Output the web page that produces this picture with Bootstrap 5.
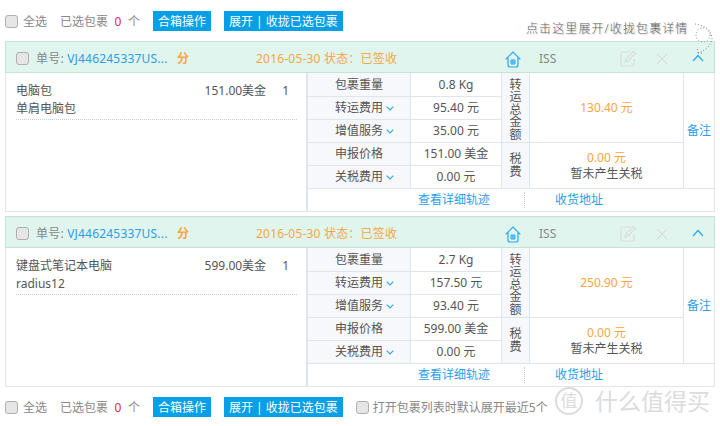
<!DOCTYPE html>
<html lang="zh-CN">
<head>
  <meta charset="UTF-8">
  <title>包裹列表</title>
  <link href="https://cdn.jsdelivr.net/npm/bootstrap@5.3.0/dist/css/bootstrap.min.css" rel="stylesheet">
  <style>
    body { font-family: "Noto Sans", "Noto Sans CJK SC", sans-serif; font-size: 12px; color: #555; width: 720px; height: 426px; overflow: hidden; position: relative; }
    .pkg-bar { height: 20px; padding-left: 5px; color: #888; }
    .pkg-bar > span:not(.pkg-check) { padding-top: 2px; }
    .pkg-top { margin-top: 11px; margin-bottom: 10px; }
    .pkg-bottom { margin-top: 10px; }
    .pkg-check { width: 13px; height: 13px; border: 1px solid #b0b0b0; border-radius: 3px; background: #e6e6e6; flex: none; }
    .pkg-btn { background: #07a0e6; color: #fff; height: 20px; line-height: 20px; padding: 1px 5px 0; font-size: 12px; border: 0; border-radius: 0; white-space: nowrap; }
    .pkg-red { color: #f0274a; }
    .pkg-gap { margin-left: 13px; }
    .pkg-near { margin-left: 6.5px; }
    .pkg-tick { margin-right: 5px; }
    .pkg-box { margin: 0 5px; width: 710px; border: 1px solid #dfe5ec; }
    .pkg-box + .pkg-box { margin-top: 4px; }
    .pkg-head { height: 32px; background: #e0f5ee; border: 1px solid #c6e3da; margin: -1px -1px 0; color: #888; position: relative; }
    .pkg-head span { line-height: 18px; }
    .pkg-blue { color: #2f9de4; text-decoration: none; }
    .pkg-orange { color: #f9a543; }
    .pkg-main { width: 301px; border-right: 1px solid #dfe5ec; padding: 9px 9px 0 10px; flex: none; }
    .pkg-item { border-bottom: 1px dotted #ccc; height: 38px; line-height: 18px; }
    .pkg-table { border-collapse: collapse; table-layout: fixed; width: 407px; }
    .pkg-table td { border: 1px solid #dfe5ec; border-top: 0; text-align: center; height: 23px; padding: 1px 0 0; line-height: 14px; }
    .pkg-table tr td:last-child { border-right: 0; }
    .pkg-table td.pkg-foot { height: 23px; border-bottom: 0; padding: 1px 0 0; }
    .pkg-label { background: #f6f8fb; }
    .pkg-chev { margin-left: 3px; margin-right: -11px; }
    .pkg-table td.pkg-stack { background: #f6f8fb; }
    .pkg-table td.pkg-stack-long { padding-top: 5px; }
    .pkg-stack span { display: block; width: 12px; margin: 0 auto; line-height: 12.5px; }
    .pkg-link-a { margin-left: 110px; }
    .pkg-sep { border-left: 1px dotted #ccc; height: 16px; margin: 0 30px 0 34px; }
    .pkg-hand { position: absolute; left: 526px; top: 20px; font-size: 12px; letter-spacing: 1.1px; color: #666; text-shadow: 1px 1px 1px #ccc; white-space: nowrap; font-weight: 300; }
    .pkg-curl { position: absolute; left: 690px; top: 20px; }
    .pkg-mark { position: absolute; left: 555px; top: 387px; color: #dcdcdc; font-size: 23px; line-height: 28px; white-space: nowrap; display: flex; align-items: center; gap: 12px; }
    .pkg-mark-circle { width: 28px; height: 28px; border: 2px solid #dcdcdc; border-radius: 50%; font-size: 17px; line-height: 23px; text-align: center; }
    .pkg-home { position: absolute; left: 499px; top: 9px; }
    .pkg-iss { position: absolute; left: 533px; top: 8px; }
    .pkg-edit { position: absolute; left: 614px; top: 8px; }
    .pkg-x { position: absolute; left: 650px; top: 11px; }
    .pkg-up { position: absolute; left: 686px; top: 12px; }
    .pkg-no { position: absolute; left: 30px; top: 8px; white-space: nowrap; letter-spacing: 0.2px; }
    .pkg-date { position: absolute; left: 250px; top: 8px; white-space: nowrap; letter-spacing: 0.2px; }
    .pkg-fen { position: absolute; left: 171px; top: 8px; font-weight: 700; }
    .pkg-headcheck { position: absolute; left: 10px; top: 10px; }
    .pkg-line { line-height: 16px; }
  </style>
</head>
<body>
  <div class="pkg-bar pkg-top d-flex align-items-center">
    <span class="pkg-check pkg-tick"></span><span>全选</span>
    <span class="pkg-gap">已选包裹</span><span class="pkg-red pkg-near">0</span><span class="pkg-near">个</span>
    <button class="btn pkg-btn pkg-gap">合箱操作</button>
    <button class="btn pkg-btn pkg-gap">展开 | 收拢已选包裹</button>
  </div>

  <div class="pkg-box">
    <div class="pkg-head">
      <span class="pkg-check pkg-headcheck d-block"></span>
      <span class="pkg-no">单号: <a class="pkg-blue" href="#">VJ446245337US...</a></span>
      <span class="pkg-fen pkg-orange">分</span>
      <span class="pkg-date pkg-orange">2016-05-30 状态：已签收</span>
      <svg class="pkg-home" width="16" height="17" viewBox="0 0 16 17" fill="none" stroke="#2aa7ea" stroke-width="1.2"><path d="M.7 8.300 8 1 15.300 8.300M3 6.500V14a2 2 0 0 0 2 2h6a2 2 0 0 0 2-2V6.500"/><path d="M6 9h4v4H6zM8 9v4M6 11h4" stroke-width="1"/></svg>
      <span class="pkg-iss">ISS</span>
      <svg class="pkg-edit" width="17" height="17" viewBox="0 0 17 17" fill="none" stroke="#d8dedb" stroke-width="1.2"><path d="M14 9V15a1 1 0 0 1-1 1H2a1 1 0 0 1-1-1V3a1 1 0 0 1 1-1h9"/><path d="M5 12 6 9 13.500 1.500 15.500 3.500 8 11z"/></svg>
      <svg class="pkg-x" width="12" height="12" viewBox="0 0 12 12" stroke="#d8dedb" stroke-width="1.100"><path d="M1 1 11 11M11 1 1 11"/></svg>
      <svg class="pkg-up" width="12" height="8" viewBox="0 0 12 8" fill="none" stroke="#2aa7ea" stroke-width="1.200"><path d="M1 7 6 1.500 11 7"/></svg>
    </div>
    <div class="d-flex">
      <div class="pkg-main">
        <div class="pkg-item d-flex">
          <div class="flex-grow-1">电脑包<br>单肩电脑包</div>
          <div class="me-2">151.00美金</div>
          <div class="me-2 ms-2">1</div>
        </div>
      </div>
      <table class="pkg-table">
        <colgroup><col style="width:103px"><col style="width:91px"><col style="width:28px"><col style="width:154px"><col></colgroup>
        <tr><td class="pkg-label">包裹重量</td><td>0.8 Kg</td><td class="pkg-stack pkg-stack-long" rowspan="3"><span>转运总金额</span></td><td class="pkg-orange" rowspan="3">130.40 元</td><td rowspan="5"><a class="pkg-blue" href="#">备注</a></td></tr>
        <tr><td class="pkg-label">转运费用<svg class="pkg-chev" width="8" height="5" viewBox="0 0 8 5" fill="none" stroke="#2aa7ea" stroke-width="1.100"><path d="M.7.700 4 4 7.300.700"/></svg></td><td>95.40 元</td></tr>
        <tr><td class="pkg-label">增值服务<svg class="pkg-chev" width="8" height="5" viewBox="0 0 8 5" fill="none" stroke="#2aa7ea" stroke-width="1.100"><path d="M.7.700 4 4 7.300.700"/></svg></td><td>35.00 元</td></tr>
        <tr><td class="pkg-label">申报价格</td><td>151.00 美金</td><td class="pkg-stack" rowspan="2"><span>税费</span></td><td rowspan="2"><div class="pkg-orange pkg-line">0.00 元</div><div class="pkg-line">暂未产生关税</div></td></tr>
        <tr><td class="pkg-label">关税费用<svg class="pkg-chev" width="8" height="5" viewBox="0 0 8 5" fill="none" stroke="#2aa7ea" stroke-width="1.100"><path d="M.7.700 4 4 7.300.700"/></svg></td><td>0.00 元</td></tr>
        <tr><td colspan="5" class="pkg-foot"><div class="d-flex align-items-center"><a class="pkg-blue pkg-link-a" href="#">查看详细轨迹</a><span class="pkg-sep"></span><a class="pkg-blue" href="#">收货地址</a></div></td></tr>
      </table>
    </div>
  </div>

  <div class="pkg-box">
    <div class="pkg-head">
      <span class="pkg-check pkg-headcheck d-block"></span>
      <span class="pkg-no">单号: <a class="pkg-blue" href="#">VJ446245337US...</a></span>
      <span class="pkg-fen pkg-orange">分</span>
      <span class="pkg-date pkg-orange">2016-05-30 状态：已签收</span>
      <svg class="pkg-home" width="16" height="17" viewBox="0 0 16 17" fill="none" stroke="#2aa7ea" stroke-width="1.2"><path d="M.7 8.300 8 1 15.300 8.300M3 6.500V14a2 2 0 0 0 2 2h6a2 2 0 0 0 2-2V6.500"/><path d="M6 9h4v4H6zM8 9v4M6 11h4" stroke-width="1"/></svg>
      <span class="pkg-iss">ISS</span>
      <svg class="pkg-edit" width="17" height="17" viewBox="0 0 17 17" fill="none" stroke="#d8dedb" stroke-width="1.2"><path d="M14 9V15a1 1 0 0 1-1 1H2a1 1 0 0 1-1-1V3a1 1 0 0 1 1-1h9"/><path d="M5 12 6 9 13.500 1.500 15.500 3.500 8 11z"/></svg>
      <svg class="pkg-x" width="12" height="12" viewBox="0 0 12 12" stroke="#d8dedb" stroke-width="1.100"><path d="M1 1 11 11M11 1 1 11"/></svg>
      <svg class="pkg-up" width="12" height="8" viewBox="0 0 12 8" fill="none" stroke="#2aa7ea" stroke-width="1.200"><path d="M1 7 6 1.500 11 7"/></svg>
    </div>
    <div class="d-flex">
      <div class="pkg-main">
        <div class="pkg-item d-flex">
          <div class="flex-grow-1">键盘式笔记本电脑<br>radius12</div>
          <div class="me-2">599.00美金</div>
          <div class="me-2 ms-2">1</div>
        </div>
      </div>
      <table class="pkg-table">
        <colgroup><col style="width:103px"><col style="width:91px"><col style="width:28px"><col style="width:154px"><col></colgroup>
        <tr><td class="pkg-label">包裹重量</td><td>2.7 Kg</td><td class="pkg-stack pkg-stack-long" rowspan="3"><span>转运总金额</span></td><td class="pkg-orange" rowspan="3">250.90 元</td><td rowspan="5"><a class="pkg-blue" href="#">备注</a></td></tr>
        <tr><td class="pkg-label">转运费用<svg class="pkg-chev" width="8" height="5" viewBox="0 0 8 5" fill="none" stroke="#2aa7ea" stroke-width="1.100"><path d="M.7.700 4 4 7.300.700"/></svg></td><td>157.50 元</td></tr>
        <tr><td class="pkg-label">增值服务<svg class="pkg-chev" width="8" height="5" viewBox="0 0 8 5" fill="none" stroke="#2aa7ea" stroke-width="1.100"><path d="M.7.700 4 4 7.300.700"/></svg></td><td>93.40 元</td></tr>
        <tr><td class="pkg-label">申报价格</td><td>599.00 美金</td><td class="pkg-stack" rowspan="2"><span>税费</span></td><td rowspan="2"><div class="pkg-orange pkg-line">0.00 元</div><div class="pkg-line">暂未产生关税</div></td></tr>
        <tr><td class="pkg-label">关税费用<svg class="pkg-chev" width="8" height="5" viewBox="0 0 8 5" fill="none" stroke="#2aa7ea" stroke-width="1.100"><path d="M.7.700 4 4 7.300.700"/></svg></td><td>0.00 元</td></tr>
        <tr><td colspan="5" class="pkg-foot"><div class="d-flex align-items-center"><a class="pkg-blue pkg-link-a" href="#">查看详细轨迹</a><span class="pkg-sep"></span><a class="pkg-blue" href="#">收货地址</a></div></td></tr>
      </table>
    </div>
  </div>

  <div class="pkg-bar pkg-bottom d-flex align-items-center">
    <span class="pkg-check pkg-tick"></span><span>全选</span>
    <span class="pkg-gap">已选包裹</span><span class="pkg-red pkg-near">0</span><span class="pkg-near">个</span>
    <button class="btn pkg-btn pkg-gap">合箱操作</button>
    <button class="btn pkg-btn pkg-gap">展开 | 收拢已选包裹</button>
    <span class="pkg-check pkg-gap me-1"></span><span>打开包裹列表时默认展开最近5个</span>
  </div>

  <div class="pkg-hand">点击这里展开/收拢包裹详情</div>
  <svg class="pkg-curl" width="26" height="38" viewBox="0 0 26 38" fill="none" stroke="#888" stroke-width="1" stroke-dasharray="1 2"><path d="M5 4C12 5 21 8 22 18 22 25 16 30 8 33M8 33 7 27M8 33 14 33"/><circle cx="13" cy="15" r="7"/></svg>
  <div class="pkg-mark"><span class="pkg-mark-circle">值</span><span>什么值得买</span></div>
</body>
</html>
